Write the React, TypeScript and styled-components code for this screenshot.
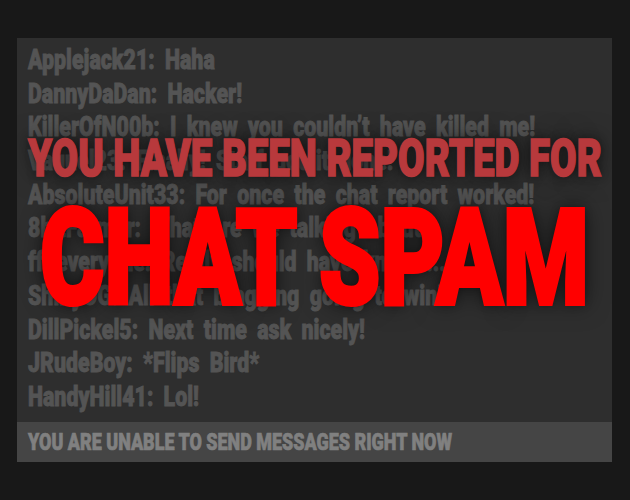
import React, { useLayoutEffect, useRef, useState } from "react";
import styled, { createGlobalStyle } from "styled-components";

const Global = createGlobalStyle`
  html, body { margin: 0; padding: 0; overflow: hidden; }
  body { background: #181818; font-family: Roboto, "Liberation Sans", sans-serif; }
`;

const Page = styled.div`
  width: 630px;
  height: 500px;
  box-sizing: border-box;
  padding: 38px 18px 0 17px;
`;

const Panel = styled.section`
  position: relative;
  height: 424px;
  display: flex;
  flex-direction: column;
  background: #2e2e2e;
  overflow: hidden;
`;

const Log = styled.ul`
  flex: 1;
  list-style: none;
  margin: 0;
  padding: 5px 11px 0;
`;

// Heavy, condensed chat line: a wide sans squeezed horizontally.
const Message = styled.li`
  height: 33.7px;
  line-height: 33.7px;
  font-size: 28px;
  font-weight: 900;
  color: #545454;
  white-space: nowrap;
  word-spacing: 6.5px;
  span {
    display: inline-block;
    transform: scaleX(0.763);
    transform-origin: 0 50%;
    -webkit-text-stroke: 0.9px #545454;
  }
`;

const Composer = styled.footer`
  height: 40px;
  flex: none;
  display: flex;
  align-items: center;
  padding-left: 11px;
  background: #454545;
  color: #808080;
  font-size: 23px;
  font-weight: 900;
  white-space: nowrap;
  span {
    display: inline-block;
    transform: scaleX(0.78);
    transform-origin: 0 50%;
    -webkit-text-stroke: 0.7px #808080;
  }
`;

const Overlay = styled.div`
  position: absolute;
  left: 0;
  right: 0;
  top: 95px;
  display: flex;
  flex-direction: column;
  align-items: center;
  gap: 7px;
  pointer-events: none;
`;

const Banner = styled.div<{ $size: number; $color: string; $width: number; $stroke: number }>`
  width: ${(p) => p.$width}px;
  height: ${(p) => p.$size}px;
  line-height: 1;
  font-size: ${(p) => p.$size}px;
  font-weight: 900;
  color: ${(p) => p.$color};
  white-space: nowrap;
  span {
    display: inline-block;
    transform-origin: 0 50%;
    -webkit-text-stroke: ${(p) => p.$stroke}px ${(p) => p.$color};
    text-shadow: 0 0 28px rgba(0, 0, 0, 0.6), 0 0 10px rgba(0, 0, 0, 0.4);
  }
`;

type BannerProps = { size: number; color: string; width: number; stroke: number; children: string };

// Squeezes a heavy headline horizontally so it spans exactly `width` pixels.
function BannerText({ size, color, width, stroke, children }: BannerProps) {
  const ref = useRef<HTMLSpanElement>(null);
  const [scale, setScale] = useState(0.7);
  useLayoutEffect(() => {
    const el = ref.current;
    if (el && el.offsetWidth) setScale(width / el.offsetWidth);
  }, [width, children]);
  return (
    <Banner $size={size} $color={color} $width={width} $stroke={stroke}>
      <span ref={ref} style={{ transform: `scaleX(${scale})` }}>
        {children}
      </span>
    </Banner>
  );
}

const messages = [
  "Applejack21: Haha",
  "DannyDaDan: Hacker!",
  "KillerOfN00b: I knew you couldn\u2019t have killed me!",
  "Vaquel23: Finally! Staff got it done!",
  "AbsoluteUnit33: For once the chat report worked!",
  "8bitFarmer: What are we talking about?",
  "ff4everyone: Really should have known...",
  "ShinyOG: All that bragging going to win!",
  "DillPickel5: Next time ask nicely!",
  "JRudeBoy: *Flips Bird*",
  "HandyHill41: Lol!",
];

export default function App() {
  return (
    <>
      <Global />
      <Page>
        <Panel>
          <Log>
            {messages.map((m) => (
              <Message key={m}>
                <span>{m}</span>
              </Message>
            ))}
          </Log>
          <Composer>
            <span>YOU ARE UNABLE TO SEND MESSAGES RIGHT NOW</span>
          </Composer>
          <Overlay>
            <BannerText size={52} color="#b8393c" width={574} stroke={1.6}>
              YOU HAVE BEEN REPORTED FOR
            </BannerText>
            <BannerText size={134} color="#ff0000" width={549} stroke={4}>
              CHAT SPAM
            </BannerText>
          </Overlay>
        </Panel>
      </Page>
    </>
  );
}
